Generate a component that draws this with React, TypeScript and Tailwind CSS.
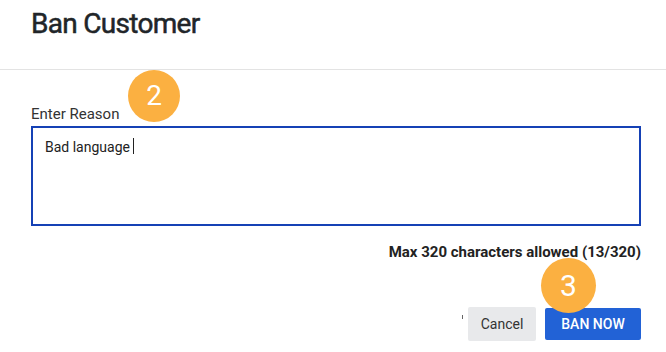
import React from 'react';

const StepBadge: React.FC<{ n: number; className: string }> = ({ n, className }) => (
  <div
    className={`absolute flex items-center justify-center rounded-full bg-[#fbb041] text-white font-normal ${className}`}
  >
    {n}
  </div>
);

export default function App() {
  return (
    <div
      className="relative w-[666px] h-[352px] bg-white overflow-hidden"
      style={{ fontFamily: 'Roboto, "Liberation Sans", sans-serif' }}
    >
      <header className="h-[70px] pl-[31px] pt-[7px] border-b border-[#e3e3e3]">
        <h2 className="text-[28px] leading-[34px] font-normal tracking-[-0.7px] text-[#212529] [-webkit-text-stroke:0.5px_#212529]">
          Ban Customer
        </h2>
      </header>

      <div className="pl-[31px] pr-[25px] pt-[34px]">
        <label className="block text-[15px] leading-[20px] text-[#333]">Enter Reason</label>
        <div className="mt-[2px] h-[100px] border-2 border-[#1541b5] px-[12px] py-[9px] text-[14px] leading-[20px] text-[#222] flex items-start">
          <span>Bad language</span>
          <span className="ml-[3px] mt-[1px] w-px h-[16px] bg-[#222]" />
        </div>
        <p className="mt-[16px] text-right text-[15px] leading-[20px] font-bold text-[#222]">
          Max 320 characters allowed (13/320)
        </p>
        <div className="mt-[45px] flex items-center justify-end">
          <span className="mr-[5px] mt-[-14px] w-px h-[4px] bg-[#666]" />
          <button className="w-[68px] h-[34px] rounded-[2px] bg-[#e8e9eb] text-[14px] text-[#333]">
            Cancel
          </button>
          <button className="ml-[9px] w-[96px] h-[32px] rounded-[2px] bg-[#2262d6] text-[14px] font-medium text-white">
            BAN NOW
          </button>
        </div>
      </div>

      <StepBadge n={2} className="left-[128px] top-[70px] w-[52px] h-[52px] text-[28px]" />
      <StepBadge n={3} className="left-[541px] top-[258px] w-[55px] h-[55px] text-[30px]" />
    </div>
  );
}
